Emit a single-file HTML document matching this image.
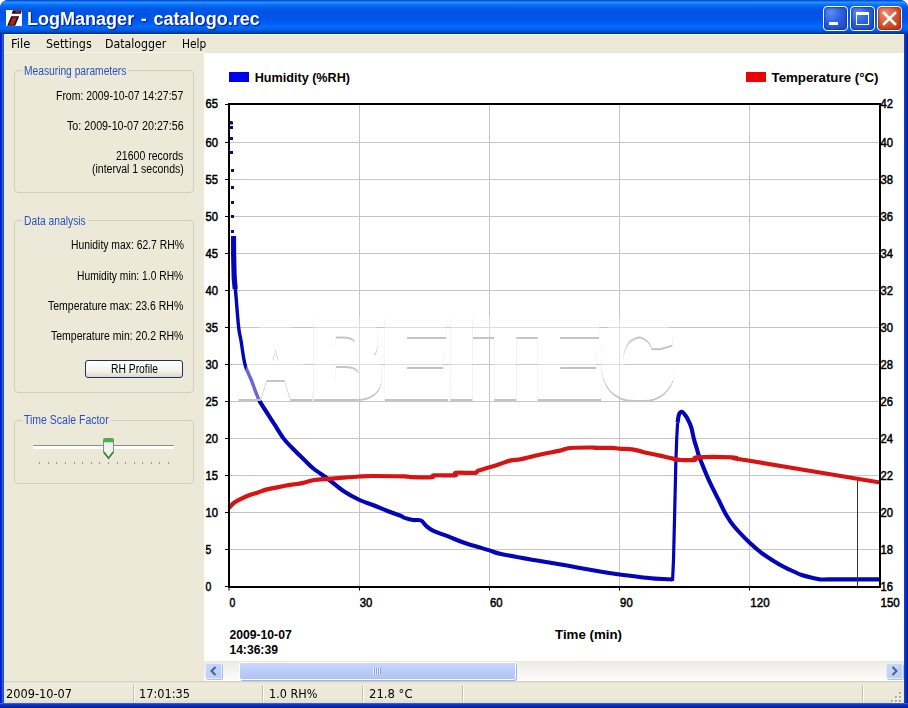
<!DOCTYPE html><html><head><meta charset="utf-8"><title>LogManager - catalogo.rec</title><style>
html,body{margin:0;padding:0;background:#fff;}
body{width:908px;height:708px;overflow:hidden;position:relative;font-family:'Liberation Sans',sans-serif;}
.abs{position:absolute;}
.tx{position:absolute;white-space:nowrap;transform-origin:0 0;display:block;}
#win{position:absolute;left:0;top:0;width:908px;height:708px;background:#0831d9;border-radius:8px 8px 0 0;overflow:hidden;}
#title{position:absolute;left:0;top:0;width:908px;height:34px;border-radius:8px 8px 0 0;
 background:linear-gradient(to bottom,#0048c8 0%,#0058ee 3%,#3593ff 6%,#288eff 8%,#127dff 11%,#036ffc 15%,#0262ee 20%,#0057e5 28%,#0054e3 36%,#0055eb 56%,#005bf5 66%,#026afe 78%,#0062ef 86%,#0052d6 92%,#0040ab 96%,#003092 100%);}
#bl{position:absolute;left:0;top:30px;width:4px;height:678px;background:linear-gradient(to right,#0019cf 0%,#0424cf 35%,#2a5fdc 62%,#1a48aa 100%);}
#br{position:absolute;left:904px;top:30px;width:4px;height:678px;background:linear-gradient(to right,#1a44c8 0%,#0c33c6 35%,#0524b4 70%,#0019a0 100%);}
#bb{position:absolute;left:0;top:703px;width:908px;height:5px;background:linear-gradient(to bottom,#5a7ce0 0%,#0c38d0 22%,#0a30c4 50%,#0524b0 75%,#001a9a 100%);}
#client{position:absolute;left:4px;top:34px;width:900px;height:669px;background:#ece9d8;}
.cbtn{position:absolute;top:6px;width:23px;height:23px;border:1px solid #fff;border-radius:4px;
 background:radial-gradient(circle at 30% 25%,#5a8df5 0%,#2a5fe0 45%,#1d46c4 100%);box-shadow:inset 0 0 2px 1px rgba(10,30,150,.55);}
#bclose{background:radial-gradient(circle at 30% 25%,#f0906f 0%,#d8512e 50%,#b5300f 100%);box-shadow:inset 0 0 2px 1px rgba(120,20,0,.5);}
.grp{position:absolute;border:1px solid #d0d0bf;border-radius:4px;box-sizing:border-box;}
.grpl{position:absolute;background:#ece9d8;height:12px;}
#status{position:absolute;left:4px;top:681px;width:900px;height:22px;background:linear-gradient(to bottom,#c5c2b2 0,#e3e0d0 1px,#efecdf 3px,#ece9d8 8px,#ece9d8 18px,#e0dccb 22px);}
.sep{position:absolute;top:685px;width:1px;height:17px;background:#c5c2b2;border-right:1px solid #fff;}
#sbar{position:absolute;left:204px;top:662px;width:700px;height:19px;background:linear-gradient(to bottom,#eeede5 0,#f3f1ec 30%,#fdfdfb 100%);}
.sbtn{position:absolute;top:663px;width:15px;height:14px;border:1px solid #e4ebfc;border-radius:2px;background:linear-gradient(135deg,#cbd9fb 0%,#b7caf7 100%);box-shadow:1px 1px 0 0 #aebfe8;}
#thumb{position:absolute;left:240px;top:663px;width:275px;height:16px;border-radius:2px;background:linear-gradient(to bottom,#c9d7fb 0%,#bdcffa 40%,#b0c4f3 100%);box-shadow:0 0 0 1px #fff, 1px 1px 0 1px #9fb5ea;}
</style></head><body>
<div id="win"><div id="bl"></div><div id="br"></div><div id="bb"></div><div id="title"></div><div id="client"></div></div>
<svg class="abs" style="left:6px;top:10px" width="16" height="16" viewBox="0 0 16 16"><rect width="16" height="16" fill="#fff"/><polygon points="6.8,0.3 15.8,0.3 14.8,3.7 5.8,3.7" fill="#1a0508"/><polygon points="9.5,1.2 14,1.2 13.6,2.6 9.1,2.6" fill="#b53a3a"/><polygon points="5.2,6.3 13.2,6.3 9.2,15.7 1.2,15.7" fill="#1a0508"/><polygon points="6.5,7.5 11.2,7.5 7.8,14.7 3.1,14.7" fill="#b32226"/></svg>
<div class="cbtn" id="bmin" style="left:823px"><div class="abs" style="left:5px;top:15px;width:9px;height:3px;background:#fff"></div></div>
<div class="cbtn" id="bmax" style="left:850px"><div class="abs" style="left:5px;top:5px;width:11px;height:9px;border:1px solid #fff;border-top:3px solid #fff;box-sizing:content-box"></div></div>
<div class="cbtn" id="bclose" style="left:877px"><svg class="abs" style="left:0;top:0" width="23" height="23" viewBox="0 0 23 23"><path d="M6 6 L17 17 M17 6 L6 17" stroke="#fff" stroke-width="2.6" stroke-linecap="square"/></svg></div>
<div class="abs" style="left:4px;top:34px;width:900px;height:1px;background:#f4f5f6"></div>
<div class="abs" style="left:4px;top:52px;width:200px;height:1px;background:#f6f4ec"></div>
<div class="grp" style="left:14px;top:70px;width:180px;height:123px"></div>
<div class="grpl" style="left:21.5px;top:65px;width:106.9px"></div>
<div class="grp" style="left:14px;top:220px;width:180px;height:173px"></div>
<div class="grpl" style="left:21.5px;top:215px;width:66.2px"></div>
<div class="grp" style="left:14px;top:420px;width:180px;height:63.5px"></div>
<div class="grpl" style="left:21.5px;top:415px;width:89.2px"></div>
<div class="abs" style="left:85px;top:360px;width:98px;height:18px;box-sizing:border-box;border:1px solid #1c3560;border-radius:3px;background:linear-gradient(to bottom,#fff 0%,#f4f3ee 60%,#dcd8cb 100%)"></div>
<div class="abs" style="left:33px;top:445px;width:141px;height:4px;box-sizing:border-box;border-top:1px solid #8d8c82;border-radius:1px;background:#fff"></div>
<svg class="abs" style="left:33px;top:462px" width="142" height="4"><rect x="6" y="0" width="1" height="2" fill="#9d9b8c"/><rect x="15" y="0" width="1" height="2" fill="#9d9b8c"/><rect x="23" y="0" width="1" height="2" fill="#9d9b8c"/><rect x="32" y="0" width="1" height="2" fill="#9d9b8c"/><rect x="41" y="0" width="1" height="2" fill="#9d9b8c"/><rect x="49" y="0" width="1" height="2" fill="#9d9b8c"/><rect x="58" y="0" width="1" height="2" fill="#9d9b8c"/><rect x="66" y="0" width="1" height="2" fill="#9d9b8c"/><rect x="75" y="0" width="1" height="2" fill="#9d9b8c"/><rect x="84" y="0" width="1" height="2" fill="#9d9b8c"/><rect x="92" y="0" width="1" height="2" fill="#9d9b8c"/><rect x="101" y="0" width="1" height="2" fill="#9d9b8c"/><rect x="109" y="0" width="1" height="2" fill="#9d9b8c"/><rect x="118" y="0" width="1" height="2" fill="#9d9b8c"/><rect x="126" y="0" width="1" height="2" fill="#9d9b8c"/><rect x="135" y="0" width="1" height="2" fill="#9d9b8c"/></svg>
<svg class="abs" style="left:102.7px;top:437.5px" width="12" height="22" viewBox="0 0 12 22"><path d="M0.5 1.5 Q0.5 0.5 1.5 0.5 H9.5 Q10.5 0.5 10.5 1.5 V14.3 L5.5 20.6 L0.5 14.3 Z" fill="#f1f4ee" stroke="#7f8f84" stroke-width="1"/><path d="M0.6 1.5 Q0.6 0.4 1.6 0.4 H9.4 Q10.4 0.4 10.4 1.5 V4.3 H0.6 Z" fill="#45b04c"/><path d="M0.8 14 L5.5 20.2 L10.2 14" fill="none" stroke="#3d7d42" stroke-width="1.7"/></svg>
<svg id="chart" width="700" height="608" viewBox="204 53 700 608" style="position:absolute;left:204px;top:53px">
<defs><filter id="wm" x="-5%" y="-10%" width="110%" height="125%"><feMorphology in="SourceAlpha" operator="dilate" radius="4" result="fat"/><feOffset in="fat" dx="0" dy="2.3" result="off"/><feComposite in="off" in2="fat" operator="out" result="shm"/><feFlood flood-color="#c4c4c4"/><feComposite in2="shm" operator="in" result="sh"/><feFlood flood-color="#fff" flood-opacity="0.4"/><feComposite in2="fat" operator="in" result="body"/><feMerge><feMergeNode in="body"/><feMergeNode in="sh"/></feMerge></filter></defs>
<rect x="204" y="53" width="700" height="608" fill="#fff"/>
<line x1="229.0" x2="880.0" y1="142.5" y2="142.5" stroke="#c6c6c6" stroke-width="1"/>
<line x1="229.0" x2="880.0" y1="179.5" y2="179.5" stroke="#c6c6c6" stroke-width="1"/>
<line x1="229.0" x2="880.0" y1="216.5" y2="216.5" stroke="#c6c6c6" stroke-width="1"/>
<line x1="229.0" x2="880.0" y1="253.5" y2="253.5" stroke="#c6c6c6" stroke-width="1"/>
<line x1="229.0" x2="880.0" y1="290.5" y2="290.5" stroke="#c6c6c6" stroke-width="1"/>
<line x1="229.0" x2="880.0" y1="327.5" y2="327.5" stroke="#c6c6c6" stroke-width="1"/>
<line x1="229.0" x2="880.0" y1="364.5" y2="364.5" stroke="#c6c6c6" stroke-width="1"/>
<line x1="229.0" x2="880.0" y1="401.5" y2="401.5" stroke="#c6c6c6" stroke-width="1"/>
<line x1="229.0" x2="880.0" y1="438.5" y2="438.5" stroke="#c6c6c6" stroke-width="1"/>
<line x1="229.0" x2="880.0" y1="475.5" y2="475.5" stroke="#c6c6c6" stroke-width="1"/>
<line x1="229.0" x2="880.0" y1="512.5" y2="512.5" stroke="#c6c6c6" stroke-width="1"/>
<line x1="229.0" x2="880.0" y1="549.5" y2="549.5" stroke="#c6c6c6" stroke-width="1"/>
<line x1="359.5" x2="359.5" y1="104.0" y2="590.0" stroke="#c6c6c6" stroke-width="1"/>
<line x1="359.5" x2="359.5" y1="587.0" y2="590.5" stroke="#000" stroke-width="1"/>
<line x1="489.5" x2="489.5" y1="104.0" y2="590.0" stroke="#c6c6c6" stroke-width="1"/>
<line x1="489.5" x2="489.5" y1="587.0" y2="590.5" stroke="#000" stroke-width="1"/>
<line x1="619.5" x2="619.5" y1="104.0" y2="590.0" stroke="#c6c6c6" stroke-width="1"/>
<line x1="619.5" x2="619.5" y1="587.0" y2="590.5" stroke="#000" stroke-width="1"/>
<line x1="749.5" x2="749.5" y1="104.0" y2="590.0" stroke="#c6c6c6" stroke-width="1"/>
<line x1="749.5" x2="749.5" y1="587.0" y2="590.5" stroke="#000" stroke-width="1"/>
<rect x="229" y="121" width="3" height="3" fill="#0a0a78"/>
<rect x="230" y="121.5" width="3" height="3" fill="#0a0a78"/>
<rect x="230" y="126" width="3" height="3" fill="#0a0a78"/>
<rect x="230" y="137" width="3" height="3" fill="#0a0a78"/>
<rect x="230" y="151" width="3" height="3" fill="#0a0a78"/>
<rect x="231" y="169" width="3" height="3" fill="#0a0a78"/>
<rect x="231" y="186" width="3" height="3" fill="#0a0a78"/>
<rect x="231" y="201" width="3" height="3" fill="#0a0a78"/>
<rect x="231" y="215" width="3" height="3" fill="#0a0a78"/>
<rect x="231" y="230" width="3" height="3" fill="#0a0a78"/>
<polyline points="233.5,236 233.6,255 234.2,278 235.2,289" fill="none" stroke="#0a0ad2" stroke-width="5.2"/>
<path d="M233.5 237.0 C233.6 242.5 233.7 261.2 234.0 270.0 C234.3 278.8 234.7 280.5 235.5 290.0 C236.3 299.5 237.7 318.7 238.6 327.0 C239.5 335.3 239.8 333.8 240.9 340.0 C242.0 346.2 243.3 357.8 245.0 364.5 C246.7 371.2 248.9 374.0 251.3 380.0 C253.7 386.0 256.5 394.9 259.2 400.5 C261.9 406.1 266.3 411.7 267.7 413.9" fill="none" stroke="#0404b8" stroke-width="3.4" stroke-linejoin="round"/><path d="M259.2 400.5 C260.6 402.7 265.1 409.8 267.7 413.9 C270.3 418.0 272.4 421.1 275.0 425.2 C277.6 429.3 280.7 434.6 283.5 438.4 C286.3 442.2 288.5 444.2 292.0 447.8 C295.5 451.4 300.7 456.5 304.4 460.0 C308.1 463.5 309.9 465.8 314.0 469.0 C318.1 472.2 323.9 475.8 328.8 479.5 C333.7 483.2 338.3 487.6 343.4 491.0 C348.5 494.4 354.7 497.7 359.6 500.0 C364.5 502.3 368.2 503.2 372.8 505.0 C377.4 506.8 383.0 509.2 387.5 511.0 C392.0 512.8 397.1 514.4 400.0 515.5 C402.9 516.6 402.5 517.1 404.7 517.9 C406.9 518.6 410.3 519.6 413.0 520.0 C415.7 520.4 418.7 519.4 421.0 520.5 C423.3 521.6 424.5 524.6 426.7 526.4 C428.9 528.2 430.3 529.5 434.0 531.2 C437.7 532.9 443.9 534.8 448.8 536.7 C453.7 538.6 458.5 540.8 463.4 542.5 C468.3 544.2 473.6 545.7 478.0 547.0 C482.4 548.3 485.8 549.2 489.6 550.4 C493.4 551.6 493.6 552.4 501.0 554.0 C508.4 555.6 523.0 558.1 534.0 560.0 C545.0 561.9 556.0 563.7 567.0 565.6 C578.0 567.5 591.2 570.1 600.0 571.6 C608.8 573.1 612.3 573.5 619.6 574.5 C626.9 575.5 638.1 576.8 644.0 577.5 C649.9 578.2 650.2 578.3 655.0 578.6 C659.8 578.9 669.7 579.4 672.6 579.5" fill="none" stroke="#0404b8" stroke-width="4.1" stroke-linejoin="round"/><polyline points="669.0,579.5 672.6,579.5 673.5,560.0 674.5,520.0 675.8,464.0 676.7,438.9 677.6,422.6" fill="none" stroke="#0404b8" stroke-width="3.2" stroke-linejoin="miter"/><path d="M677.6 422.6 C677.8 421.2 678.3 416.3 679.0 414.5 C679.7 412.7 680.8 411.9 681.7 411.8 C682.6 411.7 683.3 412.8 684.2 413.8 C685.1 414.8 685.9 415.8 687.1 418.0 C688.3 420.2 690.1 423.6 691.2 427.1 C692.3 430.6 692.9 435.1 693.9 438.9 C694.9 442.7 696.3 446.9 697.2 450.0 C698.1 453.1 697.9 453.3 699.5 457.5 C701.1 461.7 704.7 470.5 706.7 475.3 C708.7 480.1 709.7 482.1 711.7 486.2 C713.7 490.3 716.2 495.1 718.5 499.7 C720.8 504.3 723.1 509.6 725.7 514.0 C728.3 518.4 730.0 521.5 734.0 526.3 C738.0 531.1 744.9 538.2 749.7 542.8 C754.5 547.4 758.1 550.4 763.0 554.0 C767.9 557.6 774.4 561.6 779.0 564.3 C783.6 567.0 786.6 568.2 790.4 570.0 C794.2 571.8 797.9 573.7 801.7 575.0 C805.5 576.3 810.0 577.2 813.0 577.9 C816.0 578.6 817.2 579.1 820.0 579.4 C822.8 579.6 820.0 579.4 830.0 579.4 C840.0 579.4 871.7 579.4 880.0 579.4" fill="none" stroke="#0404b8" stroke-width="4.1" stroke-linejoin="round"/>
<path d="M229.0 508.0 C229.8 507.2 232.0 504.4 233.8 503.0 C235.6 501.6 237.5 500.7 240.0 499.4 C242.5 498.1 246.0 496.5 249.0 495.3 C252.0 494.1 255.0 493.4 258.0 492.4 C261.0 491.4 264.0 490.2 267.0 489.4 C270.0 488.6 273.0 488.2 276.0 487.6 C279.0 487.0 282.0 486.4 285.0 485.8 C288.0 485.2 291.2 484.8 294.0 484.3 C296.8 483.9 298.7 483.8 302.0 483.1 C305.3 482.4 309.5 480.7 314.0 480.0 C318.5 479.3 324.0 479.2 328.8 478.8 C333.6 478.4 338.0 478.1 343.0 477.7 C348.0 477.3 354.2 476.8 359.0 476.5 C363.8 476.2 364.4 476.0 372.0 476.0 C379.6 476.0 398.0 476.2 404.7 476.4 C411.4 476.6 407.4 477.1 412.0 477.2 C416.6 477.3 428.3 477.5 432.0 477.2 C435.7 476.9 430.2 475.6 434.0 475.3 C437.8 475.0 451.3 475.7 455.0 475.3 C458.7 474.9 452.7 473.2 456.0 472.8 C459.3 472.4 471.3 473.2 475.0 472.8 C478.7 472.4 475.6 471.5 478.0 470.6 C480.4 469.7 485.9 468.4 489.6 467.3 C493.3 466.2 496.6 465.1 500.0 464.0 C503.4 462.9 506.7 461.4 510.0 460.6 C513.3 459.8 517.0 459.9 520.0 459.4 C523.0 458.9 525.5 458.1 528.0 457.5 C530.5 456.9 532.3 456.3 535.0 455.7 C537.7 455.1 541.0 454.4 544.0 453.8 C547.0 453.2 550.0 452.6 553.0 452.0 C556.0 451.4 559.2 450.8 562.0 450.1 C564.8 449.4 565.3 448.4 570.0 448.0 C574.7 447.6 585.5 447.5 590.0 447.5 C594.5 447.5 593.3 447.8 597.0 447.9 C600.7 448.0 608.3 447.8 612.0 447.9 C615.7 448.0 615.7 448.4 619.0 448.6 C622.3 448.9 628.5 449.0 632.0 449.4 C635.5 449.8 637.8 450.6 640.0 451.1 C642.2 451.6 642.3 451.9 645.0 452.5 C647.7 453.1 652.8 454.1 656.0 454.8 C659.2 455.5 661.3 455.9 664.0 456.5 C666.7 457.1 669.3 457.8 672.0 458.4 C674.7 459.0 676.2 459.6 680.0 459.9 C683.8 460.1 692.2 460.3 695.0 459.9 C697.8 459.5 690.8 457.8 697.0 457.4 C703.2 457.0 725.2 457.1 732.0 457.4 C738.8 457.6 735.8 458.5 738.0 458.9 C740.2 459.3 721.3 456.1 745.0 460.0 C768.7 463.9 857.5 478.8 880.0 482.5" fill="none" stroke="#d61414" stroke-width="4.2" stroke-linejoin="round"/>
<line x1="857.5" x2="857.5" y1="481" y2="586" stroke="#333" stroke-width="1"/>
<g filter="url(#wm)"><text x="240" y="394.5" font-family="Liberation Sans, sans-serif" font-weight="bold" font-size="108" fill="#fff" textLength="432" lengthAdjust="spacingAndGlyphs">ABEITEC</text></g>
<rect x="229.0" y="104.0" width="651.0" height="483.0" fill="none" stroke="#000" stroke-width="2"/>
<line x1="225" x2="229.0" y1="104.5" y2="104.5" stroke="#000" stroke-width="1"/>
<text x="205.5" y="108.1" font-family="Liberation Sans, sans-serif" font-size="13.6" fill="#000" stroke="#000" stroke-width="0.55" lengthAdjust="spacingAndGlyphs" textLength="12.5">65</text>
<text x="880.6" y="108.1" font-family="Liberation Sans, sans-serif" font-size="13.6" fill="#000" stroke="#000" stroke-width="0.55" lengthAdjust="spacingAndGlyphs" textLength="12.5">42</text>
<line x1="225" x2="229.0" y1="142.5" y2="142.5" stroke="#000" stroke-width="1"/>
<text x="205.5" y="146.6" font-family="Liberation Sans, sans-serif" font-size="13.6" fill="#000" stroke="#000" stroke-width="0.55" lengthAdjust="spacingAndGlyphs" textLength="12.5">60</text>
<text x="880.6" y="146.6" font-family="Liberation Sans, sans-serif" font-size="13.6" fill="#000" stroke="#000" stroke-width="0.55" lengthAdjust="spacingAndGlyphs" textLength="12.5">40</text>
<line x1="225" x2="229.0" y1="179.5" y2="179.5" stroke="#000" stroke-width="1"/>
<text x="205.5" y="183.6" font-family="Liberation Sans, sans-serif" font-size="13.6" fill="#000" stroke="#000" stroke-width="0.55" lengthAdjust="spacingAndGlyphs" textLength="12.5">55</text>
<text x="880.6" y="183.6" font-family="Liberation Sans, sans-serif" font-size="13.6" fill="#000" stroke="#000" stroke-width="0.55" lengthAdjust="spacingAndGlyphs" textLength="12.5">38</text>
<line x1="225" x2="229.0" y1="216.5" y2="216.5" stroke="#000" stroke-width="1"/>
<text x="205.5" y="220.6" font-family="Liberation Sans, sans-serif" font-size="13.6" fill="#000" stroke="#000" stroke-width="0.55" lengthAdjust="spacingAndGlyphs" textLength="12.5">50</text>
<text x="880.6" y="220.6" font-family="Liberation Sans, sans-serif" font-size="13.6" fill="#000" stroke="#000" stroke-width="0.55" lengthAdjust="spacingAndGlyphs" textLength="12.5">36</text>
<line x1="225" x2="229.0" y1="253.5" y2="253.5" stroke="#000" stroke-width="1"/>
<text x="205.5" y="257.6" font-family="Liberation Sans, sans-serif" font-size="13.6" fill="#000" stroke="#000" stroke-width="0.55" lengthAdjust="spacingAndGlyphs" textLength="12.5">45</text>
<text x="880.6" y="257.6" font-family="Liberation Sans, sans-serif" font-size="13.6" fill="#000" stroke="#000" stroke-width="0.55" lengthAdjust="spacingAndGlyphs" textLength="12.5">34</text>
<line x1="225" x2="229.0" y1="290.5" y2="290.5" stroke="#000" stroke-width="1"/>
<text x="205.5" y="294.6" font-family="Liberation Sans, sans-serif" font-size="13.6" fill="#000" stroke="#000" stroke-width="0.55" lengthAdjust="spacingAndGlyphs" textLength="12.5">40</text>
<text x="880.6" y="294.6" font-family="Liberation Sans, sans-serif" font-size="13.6" fill="#000" stroke="#000" stroke-width="0.55" lengthAdjust="spacingAndGlyphs" textLength="12.5">32</text>
<line x1="225" x2="229.0" y1="327.5" y2="327.5" stroke="#000" stroke-width="1"/>
<text x="205.5" y="331.6" font-family="Liberation Sans, sans-serif" font-size="13.6" fill="#000" stroke="#000" stroke-width="0.55" lengthAdjust="spacingAndGlyphs" textLength="12.5">35</text>
<text x="880.6" y="331.6" font-family="Liberation Sans, sans-serif" font-size="13.6" fill="#000" stroke="#000" stroke-width="0.55" lengthAdjust="spacingAndGlyphs" textLength="12.5">30</text>
<line x1="225" x2="229.0" y1="364.5" y2="364.5" stroke="#000" stroke-width="1"/>
<text x="205.5" y="368.6" font-family="Liberation Sans, sans-serif" font-size="13.6" fill="#000" stroke="#000" stroke-width="0.55" lengthAdjust="spacingAndGlyphs" textLength="12.5">30</text>
<text x="880.6" y="368.6" font-family="Liberation Sans, sans-serif" font-size="13.6" fill="#000" stroke="#000" stroke-width="0.55" lengthAdjust="spacingAndGlyphs" textLength="12.5">28</text>
<line x1="225" x2="229.0" y1="401.5" y2="401.5" stroke="#000" stroke-width="1"/>
<text x="205.5" y="405.6" font-family="Liberation Sans, sans-serif" font-size="13.6" fill="#000" stroke="#000" stroke-width="0.55" lengthAdjust="spacingAndGlyphs" textLength="12.5">25</text>
<text x="880.6" y="405.6" font-family="Liberation Sans, sans-serif" font-size="13.6" fill="#000" stroke="#000" stroke-width="0.55" lengthAdjust="spacingAndGlyphs" textLength="12.5">26</text>
<line x1="225" x2="229.0" y1="438.5" y2="438.5" stroke="#000" stroke-width="1"/>
<text x="205.5" y="442.6" font-family="Liberation Sans, sans-serif" font-size="13.6" fill="#000" stroke="#000" stroke-width="0.55" lengthAdjust="spacingAndGlyphs" textLength="12.5">20</text>
<text x="880.6" y="442.6" font-family="Liberation Sans, sans-serif" font-size="13.6" fill="#000" stroke="#000" stroke-width="0.55" lengthAdjust="spacingAndGlyphs" textLength="12.5">24</text>
<line x1="225" x2="229.0" y1="475.5" y2="475.5" stroke="#000" stroke-width="1"/>
<text x="205.5" y="479.6" font-family="Liberation Sans, sans-serif" font-size="13.6" fill="#000" stroke="#000" stroke-width="0.55" lengthAdjust="spacingAndGlyphs" textLength="12.5">15</text>
<text x="880.6" y="479.6" font-family="Liberation Sans, sans-serif" font-size="13.6" fill="#000" stroke="#000" stroke-width="0.55" lengthAdjust="spacingAndGlyphs" textLength="12.5">22</text>
<line x1="225" x2="229.0" y1="512.5" y2="512.5" stroke="#000" stroke-width="1"/>
<text x="205.5" y="516.6" font-family="Liberation Sans, sans-serif" font-size="13.6" fill="#000" stroke="#000" stroke-width="0.55" lengthAdjust="spacingAndGlyphs" textLength="12.5">10</text>
<text x="880.6" y="516.6" font-family="Liberation Sans, sans-serif" font-size="13.6" fill="#000" stroke="#000" stroke-width="0.55" lengthAdjust="spacingAndGlyphs" textLength="12.5">20</text>
<line x1="225" x2="229.0" y1="549.5" y2="549.5" stroke="#000" stroke-width="1"/>
<text x="205.5" y="553.6" font-family="Liberation Sans, sans-serif" font-size="13.6" fill="#000" stroke="#000" stroke-width="0.55" lengthAdjust="spacingAndGlyphs" textLength="5.8">5</text>
<text x="880.6" y="553.6" font-family="Liberation Sans, sans-serif" font-size="13.6" fill="#000" stroke="#000" stroke-width="0.55" lengthAdjust="spacingAndGlyphs" textLength="12.5">18</text>
<line x1="225" x2="229.0" y1="586.5" y2="586.5" stroke="#000" stroke-width="1"/>
<text x="205.5" y="590.7" font-family="Liberation Sans, sans-serif" font-size="13.6" fill="#000" stroke="#000" stroke-width="0.55" lengthAdjust="spacingAndGlyphs" textLength="5.8">0</text>
<text x="880.6" y="590.7" font-family="Liberation Sans, sans-serif" font-size="13.6" fill="#000" stroke="#000" stroke-width="0.55" lengthAdjust="spacingAndGlyphs" textLength="12.5">16</text>
<line x1="229.0" x2="229.0" y1="587.0" y2="590.5" stroke="#000" stroke-width="1"/>
<text x="229.5" y="606.6" font-family="Liberation Sans, sans-serif" font-size="13.6" fill="#000" stroke="#000" stroke-width="0.55" lengthAdjust="spacingAndGlyphs" textLength="5.8">0</text>
<text x="359.7" y="606.6" font-family="Liberation Sans, sans-serif" font-size="13.6" fill="#000" stroke="#000" stroke-width="0.55" lengthAdjust="spacingAndGlyphs" textLength="12.6">30</text>
<text x="489.9" y="606.6" font-family="Liberation Sans, sans-serif" font-size="13.6" fill="#000" stroke="#000" stroke-width="0.55" lengthAdjust="spacingAndGlyphs" textLength="12.6">60</text>
<text x="620.1" y="606.6" font-family="Liberation Sans, sans-serif" font-size="13.6" fill="#000" stroke="#000" stroke-width="0.55" lengthAdjust="spacingAndGlyphs" textLength="12.6">90</text>
<text x="750.3" y="606.6" font-family="Liberation Sans, sans-serif" font-size="13.6" fill="#000" stroke="#000" stroke-width="0.55" lengthAdjust="spacingAndGlyphs" textLength="19.3">120</text>
<text x="880.5" y="606.6" font-family="Liberation Sans, sans-serif" font-size="13.6" fill="#000" stroke="#000" stroke-width="0.55" lengthAdjust="spacingAndGlyphs" textLength="19.3">150</text>
<rect x="229" y="72" width="20" height="10" fill="#0000ee"/>
<rect x="746" y="72" width="20" height="10" fill="#ee0000"/>
<text x="254.7" y="81.5" font-size="13" font-family="Liberation Sans, sans-serif" font-weight="bold" fill="#000" lengthAdjust="spacingAndGlyphs" textLength="95.3">Humidity (%RH)</text>
<text x="771.5" y="81.5" font-size="13" font-family="Liberation Sans, sans-serif" font-weight="bold" fill="#000" lengthAdjust="spacingAndGlyphs" textLength="107">Temperature (°C)</text>
<text x="229.4" y="638.5" font-size="12" font-family="Liberation Sans, sans-serif" font-weight="bold" fill="#000" lengthAdjust="spacingAndGlyphs" textLength="62.3">2009-10-07</text>
<text x="229.4" y="653.6" font-size="12" font-family="Liberation Sans, sans-serif" font-weight="bold" fill="#000" lengthAdjust="spacingAndGlyphs" textLength="48.5">14:36:39</text>
<text x="555" y="638.5" font-size="13" font-family="Liberation Sans, sans-serif" font-weight="bold" fill="#000" lengthAdjust="spacingAndGlyphs" textLength="67">Time (min)</text>
</svg>
<div id="sbar"></div>
<div class="sbtn" style="left:205px"><svg class="abs" style="left:0;top:0" width="15" height="15"><path d="M9.5 3 L5.5 7 L9.5 11" fill="none" stroke="#4d6185" stroke-width="2"/></svg></div>
<div class="sbtn" style="left:886px"><svg class="abs" style="left:0;top:0" width="15" height="15"><path d="M5.5 3 L9.5 7 L5.5 11" fill="none" stroke="#4d6185" stroke-width="2"/></svg></div>
<div id="thumb"><div class="abs" style="left:133px;top:5px;width:1px;height:6px;background:#eef4fe;border-right:1px solid #8c9fd6;"></div><div class="abs" style="left:135px;top:5px;width:1px;height:6px;background:#eef4fe;border-right:1px solid #8c9fd6;"></div><div class="abs" style="left:137px;top:5px;width:1px;height:6px;background:#eef4fe;border-right:1px solid #8c9fd6;"></div><div class="abs" style="left:139px;top:5px;width:1px;height:6px;background:#eef4fe;border-right:1px solid #8c9fd6;"></div></div>
<div id="status"></div>
<div class="sep" style="left:133px"></div>
<div class="sep" style="left:262px"></div>
<div class="sep" style="left:362px"></div>
<div class="sep" style="left:462px"></div>
<div class="sep" style="left:862px"></div>
<svg class="abs" style="left:891px;top:692px" width="12" height="12"><rect x="9" y="1" width="2" height="2" fill="#fbfaf4"/><rect x="8" y="0" width="2" height="2" fill="#aeab98"/><rect x="5" y="5" width="2" height="2" fill="#fbfaf4"/><rect x="4" y="4" width="2" height="2" fill="#aeab98"/><rect x="9" y="5" width="2" height="2" fill="#fbfaf4"/><rect x="8" y="4" width="2" height="2" fill="#aeab98"/><rect x="1" y="9" width="2" height="2" fill="#fbfaf4"/><rect x="0" y="8" width="2" height="2" fill="#aeab98"/><rect x="5" y="9" width="2" height="2" fill="#fbfaf4"/><rect x="4" y="8" width="2" height="2" fill="#aeab98"/><rect x="9" y="9" width="2" height="2" fill="#fbfaf4"/><rect x="8" y="8" width="2" height="2" fill="#aeab98"/></svg>
<span class="tx" id="t0" style="left:27.1px;top:10.59px;font:bold 17.5px/17.5px 'Liberation Sans', sans-serif;color:#fff;transform:scaleX(1.0300);text-shadow:1px 1px 1px #0a1883;word-spacing:1.63px;">LogManager - catalogo.rec</span>
<span class="tx" id="t1" style="left:11.4px;top:38.12px;font:normal 12.5px/12.5px 'DejaVu Sans Condensed', 'DejaVu Sans', sans-serif;color:#000;transform:scaleX(1.0355);">File</span>
<span class="tx" id="t2" style="left:45.6px;top:38.12px;font:normal 12.5px/12.5px 'DejaVu Sans Condensed', 'DejaVu Sans', sans-serif;color:#000;transform:scaleX(0.9905);">Settings</span>
<span class="tx" id="t3" style="left:105.4px;top:38.12px;font:normal 12.5px/12.5px 'DejaVu Sans Condensed', 'DejaVu Sans', sans-serif;color:#000;transform:scaleX(0.9779);">Datalogger</span>
<span class="tx" id="t4" style="left:181.7px;top:38.12px;font:normal 12.5px/12.5px 'DejaVu Sans Condensed', 'DejaVu Sans', sans-serif;color:#000;transform:scaleX(0.9471);">Help</span>
<span class="tx" id="t5" style="left:23.6px;top:64.85px;font:normal 12px/12px 'Liberation Sans', sans-serif;color:#2a4fc0;transform:scaleX(0.8529);">Measuring parameters</span>
<span class="tx" id="t6" style="left:23.6px;top:214.75px;font:normal 12px/12px 'Liberation Sans', sans-serif;color:#2a4fc0;transform:scaleX(0.8564);">Data analysis</span>
<span class="tx" id="t7" style="left:23.6px;top:414.45px;font:normal 12px/12px 'Liberation Sans', sans-serif;color:#2a4fc0;transform:scaleX(0.8739);">Time Scale Factor</span>
<span class="tx" id="t8" style="left:56.4px;top:89.55px;font:normal 12px/12px 'Liberation Sans', sans-serif;color:#000;transform:scaleX(0.8707);">From: 2009-10-07 14:27:57</span>
<span class="tx" id="t9" style="left:66.9px;top:119.75px;font:normal 12px/12px 'Liberation Sans', sans-serif;color:#000;transform:scaleX(0.8923);">To: 2009-10-07 20:27:56</span>
<span class="tx" id="t10" style="left:116.3px;top:149.85px;font:normal 12px/12px 'Liberation Sans', sans-serif;color:#000;transform:scaleX(0.8772);">21600 records</span>
<span class="tx" id="t11" style="left:92.2px;top:162.65px;font:normal 12px/12px 'Liberation Sans', sans-serif;color:#000;transform:scaleX(0.8766);">(interval 1 seconds)</span>
<span class="tx" id="t12" style="left:70.7px;top:239.45px;font:normal 12px/12px 'Liberation Sans', sans-serif;color:#000;transform:scaleX(0.8637);">Hunidity max: 62.7 RH%</span>
<span class="tx" id="t13" style="left:77.4px;top:269.55px;font:normal 12px/12px 'Liberation Sans', sans-serif;color:#000;transform:scaleX(0.8562);">Humidity min: 1.0 RH%</span>
<span class="tx" id="t14" style="left:48.4px;top:299.85px;font:normal 12px/12px 'Liberation Sans', sans-serif;color:#000;transform:scaleX(0.8738);">Temperature max: 23.6 RH%</span>
<span class="tx" id="t15" style="left:51.2px;top:329.85px;font:normal 12px/12px 'Liberation Sans', sans-serif;color:#000;transform:scaleX(0.8745);">Temperature min: 20.2 RH%</span>
<span class="tx" id="t16" style="left:110.5px;top:363.05px;font:normal 12px/12px 'Liberation Sans', sans-serif;color:#000;transform:scaleX(0.8594);">RH Profile</span>
<span class="tx" id="t17" style="left:5.8px;top:688.22px;font:normal 12.5px/12.5px 'DejaVu Sans Condensed', 'DejaVu Sans', sans-serif;color:#000;transform:scaleX(1.0113);">2009-10-07</span>
<span class="tx" id="t18" style="left:138.8px;top:688.22px;font:normal 12.5px/12.5px 'DejaVu Sans Condensed', 'DejaVu Sans', sans-serif;color:#000;transform:scaleX(1.0096);">17:01:35</span>
<span class="tx" id="t19" style="left:269.4px;top:688.22px;font:normal 12.5px/12.5px 'DejaVu Sans Condensed', 'DejaVu Sans', sans-serif;color:#000;transform:scaleX(0.9995);">1.0 RH%</span>
<span class="tx" id="t20" style="left:368.5px;top:688.22px;font:normal 12.5px/12.5px 'DejaVu Sans Condensed', 'DejaVu Sans', sans-serif;color:#000;transform:scaleX(1.0338);">21.8 °C</span>
</body></html>
